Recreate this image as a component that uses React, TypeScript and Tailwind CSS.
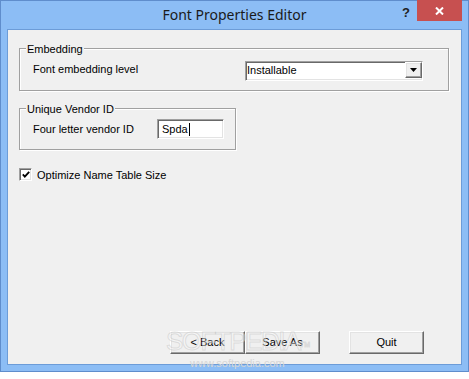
const sunken =
  "border border-t-[#a0a0a0] border-l-[#a0a0a0] border-b-white border-r-white shadow-[inset_1px_1px_0_#696969,inset_-1px_-1px_0_#e3e3e3]";
const raised =
  "border border-t-white border-l-white border-b-[#696969] border-r-[#696969] shadow-[inset_-1px_-1px_0_#a0a0a0,inset_1px_1px_0_#e3e3e3] bg-[#f0f0f0]";
const groupBox =
  "relative border border-[#a0a0a0] shadow-[inset_1px_1px_0_#fff,1px_1px_0_#fff]";

function GroupBox({
  title,
  className,
  children,
}: {
  title: string;
  className: string;
  children: React.ReactNode;
}) {
  return (
    <div className={`${groupBox} ${className}`}>
      <span className="absolute -top-[6px] left-[6px] bg-[#f0f0f0] px-px leading-[13px]">{title}</span>
      {children}
    </div>
  );
}

function DialogButton({ label, className = "" }: { label: string; className?: string }) {
  return (
    <button className={`${raised} flex h-[23px] w-[75px] items-center justify-center leading-[13px] ${className}`}>
      {label}
    </button>
  );
}

export default function App() {
  return (
    <div className="h-[379px] w-[469px] bg-white font-['Liberation_Sans',Arial,sans-serif] text-[11px] text-black">
      <div className="relative flex h-[372px] w-[469px] flex-col border border-[#5f8dcc] bg-[#8cbdf5]">
        {/* title bar */}
        <div className="h-[28px] pt-[4px] text-center font-['Noto_Sans',sans-serif] text-[14px] leading-[20px] text-[#1a1a1a]">
          Font Properties Editor
        </div>
        <div className="absolute right-[58px] top-[3px] font-['Liberation_Sans',sans-serif] text-[13px] font-bold leading-[18px] text-[#222]">
          ?
        </div>
        <div className="absolute -top-px right-[6px] flex h-[21px] w-[45px] items-center justify-center bg-[#c75050]">
          <svg width="9" height="8" viewBox="0 0 9 8">
            <path d="M1 0.5 L8 7.5 M8 0.5 L1 7.5" stroke="#fff" strokeWidth="2" />
          </svg>
        </div>

        {/* client area */}
        <div className="mx-[6px] flex h-[336px] flex-col border border-[#6c9cd8] bg-[#f0f0f0] pb-[10px]">
          <GroupBox title="Embedding" className="ml-[11px] mt-[18px] flex h-[43px] w-[430px] pl-[13px] pt-[12px]">
            <span className="mt-[2px] w-[212px] leading-[13px]">Font embedding level</span>
            <div className={`${sunken} flex h-[20px] w-[178px] bg-white`}>
              <span className="flex-1 pl-px pt-[2px] leading-[13px]">Installable</span>
              <div className={`${raised} flex h-[16px] w-[17px] items-center justify-center`}>
                <svg width="7" height="4" viewBox="0 0 7 4">
                  <path d="M0 0 H7 L3.5 4 Z" fill="#000" />
                </svg>
              </div>
            </div>
          </GroupBox>

          <GroupBox title="Unique Vendor ID" className="ml-[11px] mt-[17px] flex h-[42px] w-[217px] pl-[13px] pt-[10px]">
            <span className="mt-[4px] w-[124px] leading-[13px]">Four letter vendor ID</span>
            <div className={`${sunken} flex h-[20px] w-[67px] items-center bg-white pl-[4px]`}>
              <span className="leading-[13px]">Spda</span>
              <span className="ml-px h-[13px] w-px bg-black" />
            </div>
          </GroupBox>

          <div className="ml-[11px] mt-[18px] flex items-start gap-[5px]">
            <div className={`${sunken} flex h-[13px] w-[13px] items-center justify-center bg-white`}>
              <svg width="8" height="7" viewBox="0 0 8 7">
                <path d="M0.8 3.4 L2.8 5.6 L7.2 0.8" stroke="#000" strokeWidth="1.8" fill="none" />
              </svg>
            </div>
            <span className="mt-px leading-[13px]">Optimize Name Table Size</span>
          </div>

          <div className="mt-auto ml-[162px] flex">
            <DialogButton label="< Back" />
            <DialogButton label="Save As" />
            <DialogButton label="Quit" className="ml-[29px]" />
          </div>
        </div>

        {/* softpedia watermark */}
        <div className="pointer-events-none absolute left-[165px] top-[325px] font-['Liberation_Sans',sans-serif] text-[26px] leading-[30px] tracking-[-1.5px] text-white/40 [-webkit-text-stroke:1px_rgba(190,190,190,0.45)]">
          SOFTPEDIA<sup className="text-[7px] tracking-normal">TM</sup>
        </div>
        <div className="pointer-events-none absolute left-[189px] top-[354px] font-['Liberation_Sans',sans-serif] text-[11px] text-[#d6d6d6]">
          www.softpedia.com
        </div>
      </div>
    </div>
  );
}
